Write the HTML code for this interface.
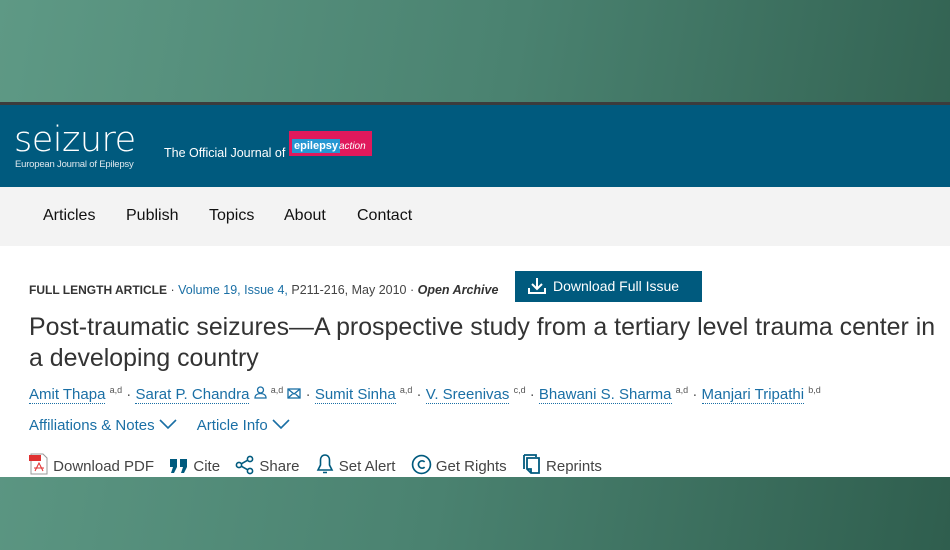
<!DOCTYPE html>
<html><head><meta charset="utf-8"><style>
*{margin:0;padding:0;box-sizing:border-box}
body{width:950px;height:550px;overflow:hidden;font-family:"Liberation Sans",sans-serif;background:linear-gradient(100deg,#5e9985 0%,#4a8270 50%,#2f5e4e 100%);position:relative}
.bar{position:absolute;left:0;top:102px;width:950px;height:3px;background:#3c3c3c}
.hdr{position:absolute;left:0;top:105px;width:950px;height:82px;background:#005a7e;color:#fff}
.logo{position:absolute;left:14px;top:15px;font-size:35px;color:#fff;font-family:"DejaVu Sans","Liberation Sans",sans-serif;font-weight:200;letter-spacing:-0.5px}
.sub{position:absolute;left:15px;top:54px;font-size:9.5px;color:#dfe8ee;letter-spacing:-0.2px}
.off{position:absolute;left:164px;top:41px;font-size:12.5px}
.ea{position:absolute;left:289px;top:26px;width:83px;height:25px;background:#e0195c}
.ea span{position:absolute;left:3px;top:8px;background:#2597d2;color:#fff;font-size:11px;font-weight:bold;padding:1px 2px}
.ea i{position:absolute;left:50px;top:10px;font-size:10px;color:#fff}
.nav{position:absolute;left:0;top:187px;width:950px;height:59px;background:#f3f3f3;font-size:16px;color:#111}
.nav span{position:absolute;top:20px}
.main{position:absolute;left:0;top:246px;width:950px;height:231px;background:#fff;color:#333}
.meta{position:absolute;left:29px;top:37px;font-size:12.5px;color:#444;white-space:nowrap}
.blue{color:#1a6fa5}
.btn{position:absolute;left:515px;top:25px;width:187px;height:31px;background:#005a7e;color:#fff;font-size:14px;padding:7px 0 0 38px}
.title{position:absolute;left:29px;top:66px;font-size:24.9px;line-height:31px;color:#333;width:921px}
.auth{position:absolute;left:29px;top:139px;font-size:15px;color:#555;white-space:nowrap}
.auth a{color:#1a6fa5;text-decoration:none;border-bottom:1px dotted #1a6fa5}
sup{font-size:9px;color:#555}
.aff{position:absolute;left:29px;top:171px;font-size:15px;color:#1a6fa5}
.tools{position:absolute;left:29px;top:207px;font-size:15px;color:#444;white-space:nowrap}
.tools span{display:inline-block;margin-right:11px}
.tools svg{vertical-align:-4px}
</style></head><body>
<div class="bar"></div>
<div class="hdr">
<div class="logo">seizure</div>
<div class="sub">European Journal of Epilepsy</div>
<div class="off">The Official Journal of</div>
<div class="ea"><span>epilepsy</span><i>action</i></div>
</div>
<div class="nav"><span style="left:43px">Articles</span><span style="left:126px">Publish</span><span style="left:209px">Topics</span><span style="left:284px">About</span><span style="left:357px">Contact</span></div>
<div class="main">
<div class="meta"><b style="color:#333;font-size:12px">FULL LENGTH ARTICLE</b> · <span class="blue">Volume 19, Issue 4,</span> P211-216, May 2010 · <b><i style="color:#333">Open Archive</i></b></div>
<div class="btn"><svg style="position:absolute;left:12px;top:6px" width="20" height="18" viewBox="0 0 20 18" fill="none" stroke="#fff" stroke-width="2"><path d="M10 1v10M5 7l5 5 5-5M2 11v5h16v-5"/></svg>Download Full Issue</div>
<div class="title">Post-traumatic seizures—A prospective study from a tertiary level trauma center in a developing country</div>
<div class="auth"><a>Amit Thapa</a> <sup>a,d</sup> · <a>Sarat P. Chandra</a> <svg width="13" height="13" viewBox="0 0 13 13" fill="none" stroke="#1a6fa5" stroke-width="1.3"><circle cx="6.5" cy="4" r="3"/><path d="M1 12c0-3 2.5-4.5 5.5-4.5S12 9 12 12z"/></svg> <sup>a,d</sup> <svg width="14" height="11" viewBox="0 0 14 11" fill="none" stroke="#1a6fa5" stroke-width="1.3"><rect x="1" y="1" width="12" height="9"/><path d="M1 1l6 5 6-5M1 10l4.5-4M13 10l-4.5-4"/></svg> · <a>Sumit Sinha</a> <sup>a,d</sup> · <a>V. Sreenivas</a> <sup>c,d</sup> · <a>Bhawani S. Sharma</a> <sup>a,d</sup> · <a>Manjari Tripathi</a> <sup>b,d</sup></div>
<div class="aff">Affiliations &amp; Notes <svg width="18" height="11" viewBox="0 0 18 11" fill="none" stroke="#1a6fa5" stroke-width="1.6"><path d="M1 1l8 8 8-8"/></svg> &nbsp; &nbsp; Article Info <svg width="18" height="11" viewBox="0 0 18 11" fill="none" stroke="#1a6fa5" stroke-width="1.6"><path d="M1 1l8 8 8-8"/></svg></div>
<div class="tools">
<span><svg width="20" height="22" viewBox="0 0 20 22"><path d="M2 1h12l4 4v16H2z" fill="#fff" stroke="#999"/><rect x="0" y="2" width="12" height="6" fill="#e03030"/><path d="M6 18l4-8 4 8M5 15h10" stroke="#e03030" fill="none"/></svg> Download PDF</span>
<span><svg width="20" height="18" viewBox="0 0 20 18" fill="#005a7e"><path d="M1 2h7v8l-3 6H2l2-6H1zM11 2h7v8l-3 6h-3l2-6h-3z"/></svg> Cite</span>
<span><svg width="20" height="20" viewBox="0 0 20 20" fill="none" stroke="#005a7e" stroke-width="1.6"><circle cx="4" cy="10" r="2.6"/><circle cx="15" cy="4" r="2.6"/><circle cx="15" cy="16" r="2.6"/><path d="M6.3 8.8l6.4-3.6M6.3 11.2l6.4 3.6"/></svg> Share</span>
<span><svg width="20" height="22" viewBox="0 0 20 22" fill="none" stroke="#005a7e" stroke-width="1.6"><path d="M10 2c-3 0-4.5 2.5-4.5 5v5L3 17h14l-2.5-5V7C14.5 4.5 13 2 10 2zM8 19.5h4"/></svg> Set Alert</span>
<span><svg width="21" height="21" viewBox="0 0 20 20" fill="none" stroke="#005a7e" stroke-width="1.6"><circle cx="10" cy="10" r="8.5"/><path d="M13 7.5a3.5 3.5 0 1 0 0 5"/></svg> Get Rights</span>
<span><svg width="20" height="22" viewBox="0 0 20 22" fill="none" stroke="#005a7e" stroke-width="1.8"><path d="M2 2h12v2M2 2v14M5 5h12v15h-8l-4-4z"/><path d="M9 20v-4H5"/></svg> Reprints</span>
</div>
</div>
</body></html>
